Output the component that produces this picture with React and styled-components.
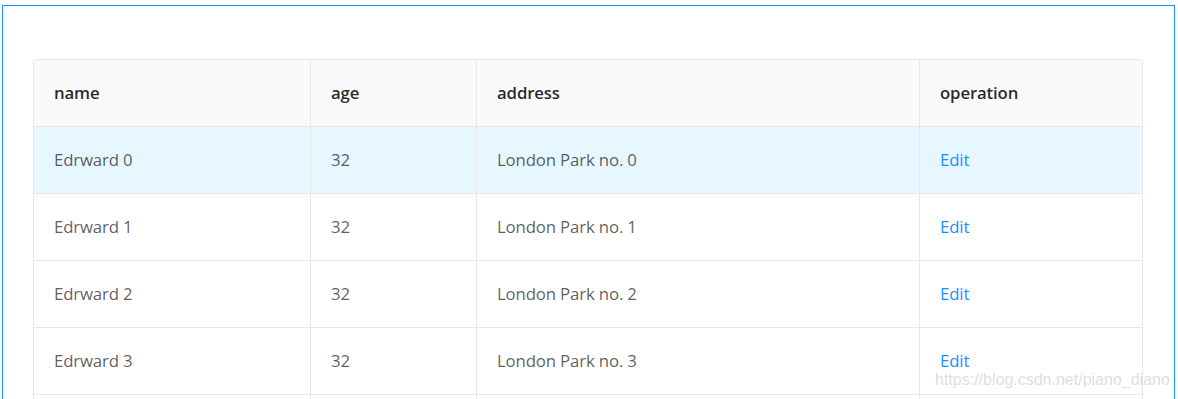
import React from "react";
import styled, { createGlobalStyle } from "styled-components";

const Global = createGlobalStyle`
  html, body { margin: 0; padding: 0; background: #fff; }
  body { font-family: "Open Sans", "Noto Sans", sans-serif; overflow: hidden; }
`;

const Frame = styled.div`
  margin: 5px 3px 0 2px;
  border: 1px solid #1890ff;
  padding: 53px 31px 40px 30px;
  min-height: 500px;
`;

const TableBox = styled.div`
  border: 1px solid #e8e8e8;
  border-bottom: none;
  border-radius: 4px 4px 0 0;
  overflow: hidden;
  display: grid;
  grid-template-columns: 277px 166px 443px 1fr;
`;

const Cell = styled.div`
  padding: 20px 20px;
  line-height: 26px;
  font-size: 16.8px;
  letter-spacing: -0.15px;
  border-bottom: 1px solid #e8e8e8;
  border-right: ${(p) => (p.$last ? "none" : "1px solid #e8e8e8")};
  background: ${(p) => (p.$head ? "#fafafa" : p.$selected ? "#e6f7ff" : "#fff")};
  color: ${(p) => (p.$head ? "rgba(0,0,0,0.85)" : "rgba(0,0,0,0.65)")};
  font-weight: ${(p) => (p.$head ? 600 : 400)};
  white-space: nowrap;
`;

const Link = styled.a`
  color: #1890ff;
  text-decoration: none;
  cursor: pointer;
`;

const Watermark = styled.div`
  position: absolute;
  left: 935px;
  top: 371px;
  font-family: "Liberation Sans", Arial, sans-serif;
  font-size: 16px;
  color: rgba(170, 170, 170, 0.4);
  pointer-events: none;
  white-space: nowrap;
`;

const rows = [0, 1, 2, 3, 4].map((i) => ({
  name: `Edrward ${i}`,
  age: 32,
  address: `London Park no. ${i}`,
}));

const cols = ["name", "age", "address", "operation"];

export default function App() {
  return (
    <>
      <Global />
      <Frame>
        <TableBox>
          {cols.map((c, i) => (
            <Cell key={c} $head $last={i === cols.length - 1}>
              {c}
            </Cell>
          ))}
          {rows.map((r, i) => (
            <React.Fragment key={i}>
              <Cell $selected={i === 0}>{r.name}</Cell>
              <Cell $selected={i === 0}>{r.age}</Cell>
              <Cell $selected={i === 0}>{r.address}</Cell>
              <Cell $selected={i === 0} $last>
                <Link>Edit</Link>
              </Cell>
            </React.Fragment>
          ))}
        </TableBox>
      </Frame>
      <Watermark>https://blog.csdn.net/piano_diano</Watermark>
    </>
  );
}
